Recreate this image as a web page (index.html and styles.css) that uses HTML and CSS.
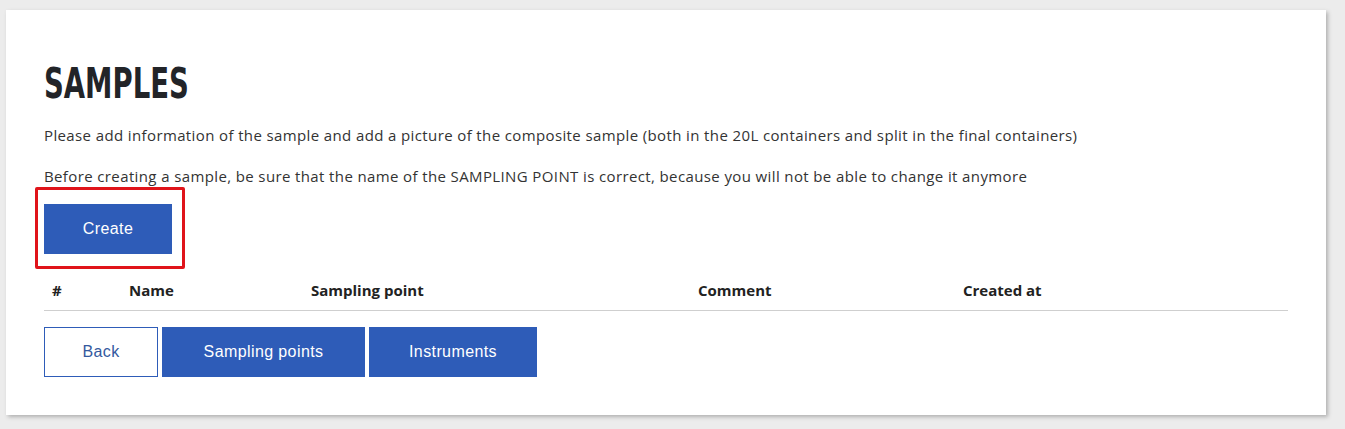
FILE: index.html
```html
<!DOCTYPE html>
<html>
<head>
<meta charset="utf-8">
<link rel="stylesheet" href="styles.css">
</head>
<body>
<div class="card">
  <h1 class="title">SAMPLES</h1>
  <p class="text">Please add information of the sample and add a picture of the composite sample (both in the 20L containers and split in the final containers)</p>
  <p class="text">Before creating a sample, be sure that the name of the SAMPLING POINT is correct, because you will not be able to change it anymore</p>
  <div class="create-wrap">
    <button class="btn btn-primary btn-create">Create</button>
    <span class="highlight"></span>
  </div>
  <table class="table">
    <thead>
      <tr>
        <th class="c1">#</th>
        <th class="c2">Name</th>
        <th class="c3">Sampling point</th>
        <th class="c4">Comment</th>
        <th class="c5">Created at</th>
      </tr>
    </thead>
  </table>
  <div class="actions">
    <button class="btn btn-outline">Back</button>
    <button class="btn btn-primary">Sampling points</button>
    <button class="btn btn-primary">Instruments</button>
  </div>
</div>
</body>
</html>
```

FILE: styles.css
```css
html, body {
  margin: 0;
  padding: 0;
  background: #ececec;
}
body {
  padding: 10px 0 0 6px;
  height: 429px;
  box-sizing: border-box;
  overflow: hidden;
}
.card {
  width: 1320px;
  box-sizing: border-box;
  background: #fff;
  padding: 50px 38px 38px 38px;
  box-shadow: 2px 2px 4px rgba(0,0,0,0.25);
  font-family: "Open Sans", sans-serif;
  color: #333;
}
.title {
  display: inline-block;
  margin: 0 0 16px 0;
  font-family: "DejaVu Sans", sans-serif;
  font-weight: 700;
  font-size: 42px;
  line-height: 48px;
  color: #222428;
  transform: scaleX(0.655);
  transform-origin: left center;
}
.text {
  margin: 0 0 19px 0;
  font-size: 15px;
  line-height: 22px;
  letter-spacing: 0.38px;
  color: #333;
}
.create-wrap {
  position: relative;
  display: flex;
  width: fit-content;
  margin-top: -2px;
}
.highlight {
  position: absolute;
  left: -9px;
  top: -17px;
  width: 150px;
  height: 82px;
  box-sizing: border-box;
  border: 3px solid #e0141a;
  border-radius: 2px;
}
.btn {
  font-family: "Liberation Sans", Arial, sans-serif;
  font-size: 16px;
  letter-spacing: 0.4px;
  height: 50px;
  padding: 0 38px;
  border: 1px solid #2e5cb8;
  border-radius: 0;
  vertical-align: top;
  margin: 0;
}
.btn-primary {
  background: #2e5cb8;
  color: #fff;
}
.btn-outline {
  background: #fff;
  color: #34599e;
}
.btn-create {
  width: 128px;
  padding: 0;
}
.table {
  width: 1244px;
  border-collapse: collapse;
  margin-top: 18px;
}
.table th {
  text-align: left;
  font-weight: 700;
  font-size: 15px;
  color: #222;
  padding: 8px 8px 10px 8px;
  line-height: 20px;
  border-bottom: 1px solid #cfcfcf;
}
.c1 { width: 61px; }
.c2 { width: 166px; }
.c3 { width: 371px; }
.c4 { width: 249px; }
.actions {
  display: flex;
  gap: 4px;
  margin-top: 16px;
}
.actions .btn-outline { width: 114px; padding: 0; }
.actions .btn-primary:nth-child(2) { width: 203px; padding: 0; }
.actions .btn-primary:nth-child(3) { width: 168px; padding: 0; }
```
